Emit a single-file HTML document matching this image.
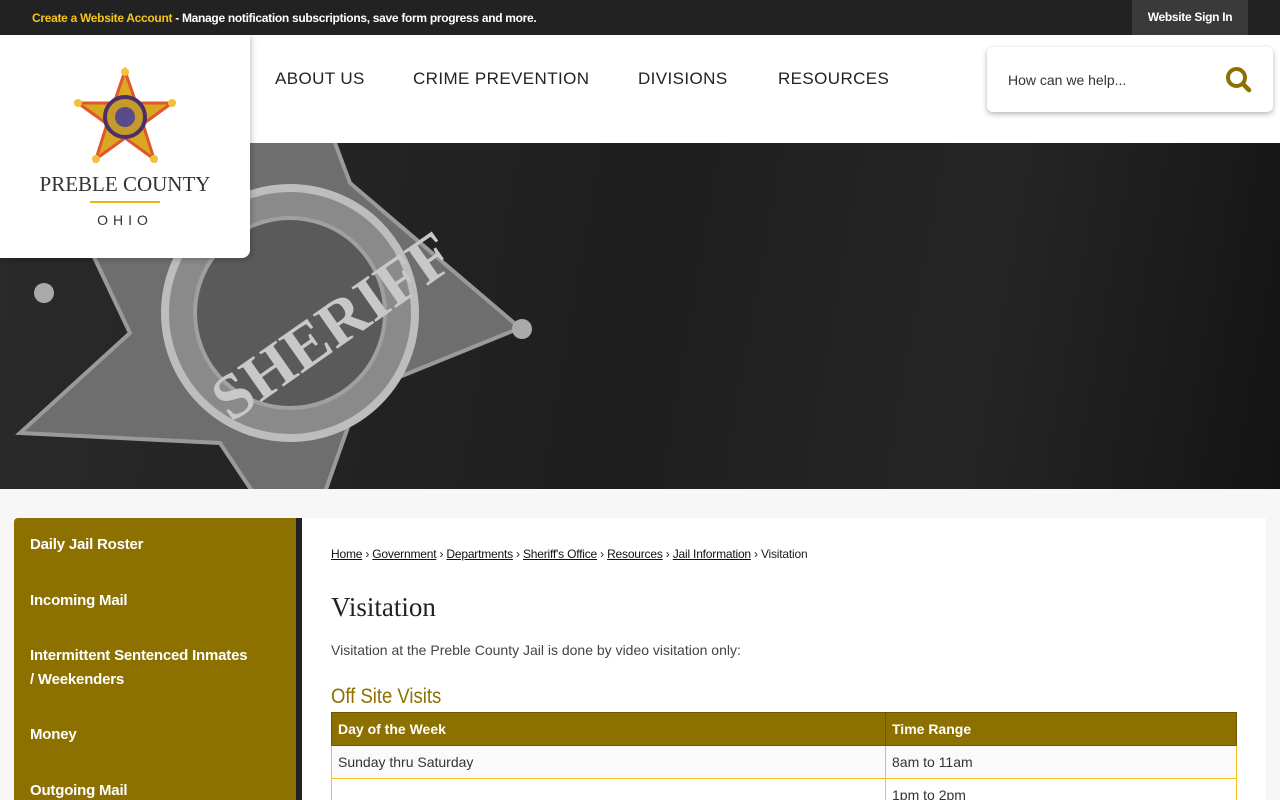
<!DOCTYPE html>
<html><head><meta charset="utf-8"><style>
*{margin:0;padding:0;box-sizing:border-box}
html,body{width:1280px;height:800px;overflow:hidden}
body{background:#f7f7f7;font-family:"Liberation Sans",Arial,sans-serif;position:relative}
.top{position:absolute;left:0;top:0;width:1280px;height:35px;background:#222}
.top .msg{position:absolute;left:32px;top:11px;font-size:12px;color:#fff;font-weight:bold;letter-spacing:-0.3px}
.top .msg b{color:#f5c419}
.top .sign{position:absolute;left:1132px;top:0;width:116px;height:35px;background:#3a3a3a;color:#fff;font-size:12px;font-weight:bold;text-align:center;line-height:35px;letter-spacing:-0.3px}
.hdr{position:absolute;left:0;top:35px;width:1280px;height:108px;background:#fff}
.nav{position:absolute;top:69px;font-size:17px;letter-spacing:0.4px;color:#222}
.search{position:absolute;left:987px;top:47px;width:286px;height:65px;background:#fff;border-radius:6px;box-shadow:0 2px 6px rgba(0,0,0,.3)}
.search span{position:absolute;left:21px;top:25px;font-size:14px;color:#333}
.hero{position:absolute;left:0;top:143px;width:1280px;height:346px;background:linear-gradient(100deg,#2a2a2a,#1e1e1e 50%,#262626 75%,#141414);overflow:hidden}
.logo{position:absolute;left:0;top:35px;width:250px;height:223px;background:#fff;border-radius:0 0 8px 0;box-shadow:2px 2px 6px rgba(0,0,0,.2)}
.logo .t1{position:absolute;left:0;width:250px;top:137px;text-align:center;font-family:"Liberation Serif",serif;font-size:21px;color:#333}
.logo .ln{position:absolute;left:90px;top:166px;width:70px;height:2px;background:#e8b70e}
.logo .t2{position:absolute;left:0;width:250px;top:177px;text-align:center;font-size:14px;letter-spacing:5px;color:#333}
.side{position:absolute;left:14px;top:518px;width:288px;height:282px;background:#8c7000;border-right:6px solid #222;border-radius:4px 0 0 0}
.side div{position:absolute;left:16px;color:#fff;font-weight:bold;font-size:15px;line-height:24px;letter-spacing:-0.2px}
.main{position:absolute;left:302px;top:518px;width:964px;height:282px;background:#fff;overflow:hidden}
.bc{position:absolute;left:29px;top:29px;font-size:12px;color:#222;letter-spacing:-0.2px}
.bc u{color:#111}
h1{position:absolute;left:29px;top:74px;font-family:"Liberation Serif",serif;font-weight:normal;font-size:27px;color:#222}
.p{position:absolute;left:29px;top:124px;font-size:14px;color:#444}
h2{position:absolute;left:29px;top:167px;font-family:"Liberation Sans Narrow","Liberation Sans",sans-serif;font-weight:normal;font-size:21px;color:#8c7000;transform:scaleX(.88);transform-origin:left}
table{position:absolute;left:29px;top:194px;width:906px;border-collapse:collapse;font-size:14px}
th{background:#8c7000;color:#fff;text-align:left;height:33px;padding:0 6px;border:1px solid #6b5800}
td{height:33px;padding:0 6px;border:1px solid #f5c419;color:#333}
</style></head><body>
<div class="top"><div class="msg"><b>Create a Website Account</b> - Manage notification subscriptions, save form progress and more.</div><div class="sign">Website Sign In</div></div>
<div class="hdr"></div>
<div class="nav" style="left:275px">ABOUT US</div>
<div class="nav" style="left:413px">CRIME PREVENTION</div>
<div class="nav" style="left:638px">DIVISIONS</div>
<div class="nav" style="left:778px">RESOURCES</div>
<div class="search"><span>How can we help...</span>
<svg style="position:absolute;left:238px;top:19px" width="28" height="28" viewBox="0 0 28 28"><circle cx="11.5" cy="11.5" r="8.5" fill="none" stroke="#8c7000" stroke-width="4"/><line x1="18" y1="18" x2="24" y2="24" stroke="#8c7000" stroke-width="4.5" stroke-linecap="round"/></svg></div>
<div class="hero">
<svg width="1280" height="346" viewBox="0 0 1280 346">
<polygon points="290,-120 350,40 520,185 360,250 300,420 220,300 20,290 130,190 40,0 210,40" fill="#6e6e6e" stroke="#9a9a9a" stroke-width="4"/>
<circle cx="290" cy="170" r="125" fill="#8a8a8a" stroke="#bdbdbd" stroke-width="8"/>
<circle cx="290" cy="170" r="95" fill="#5a5a5a" stroke="#a0a0a0" stroke-width="4"/>
<text x="190" y="230" font-family="Liberation Serif" font-weight="bold" font-size="64" fill="#c8c8c8" transform="rotate(-35 290 190)">SHERIFF</text>
<circle cx="44" cy="150" r="10" fill="#aaa"/><circle cx="522" cy="186" r="10" fill="#aaa"/>
</svg></div>
<div class="logo">
<svg style="position:absolute;left:72px;top:32px" width="106" height="100" viewBox="0 0 106 100"><polygon points="53,4 64,36 100,36 71,57 82,92 53,71 24,92 35,57 6,36 42,36" fill="#d9a822" stroke="#e0572a" stroke-width="3"/><circle cx="53" cy="50" r="20" fill="#c49a2a" stroke="#4a2f6b" stroke-width="4"/><circle cx="53" cy="50" r="10" fill="#5a4a8a"/><circle cx="53" cy="5" r="4" fill="#f2c03a"/><circle cx="100" cy="36" r="4" fill="#f2c03a"/><circle cx="6" cy="36" r="4" fill="#f2c03a"/><circle cx="82" cy="92" r="4" fill="#f2c03a"/><circle cx="24" cy="92" r="4" fill="#f2c03a"/></svg>
<div class="t1">PREBLE COUNTY</div><div class="ln"></div><div class="t2">OHIO</div></div>
<div class="side">
<div style="top:15px">Daily Jail Roster</div>
<div style="top:71px">Incoming Mail</div>
<div style="top:126px">Intermittent Sentenced Inmates<br>/ Weekenders</div>
<div style="top:205px">Money</div>
<div style="top:261px">Outgoing Mail</div>
</div>
<div class="main">
<div class="bc"><u>Home</u> › <u>Government</u> › <u>Departments</u> › <u>Sheriff's Office</u> › <u>Resources</u> › <u>Jail Information</u> › Visitation</div>
<h1>Visitation</h1>
<div class="p">Visitation at the Preble County Jail is done by video visitation only:</div>
<h2>Off Site Visits</h2>
<table><tr><th style="width:554px">Day of the Week</th><th>Time Range</th></tr>
<tr><td style="background:#fafafa">Sunday thru Saturday</td><td style="background:#fafafa">8am to 11am</td></tr>
<tr><td></td><td>1pm to 2pm</td></tr></table>
</div>
</body></html>
